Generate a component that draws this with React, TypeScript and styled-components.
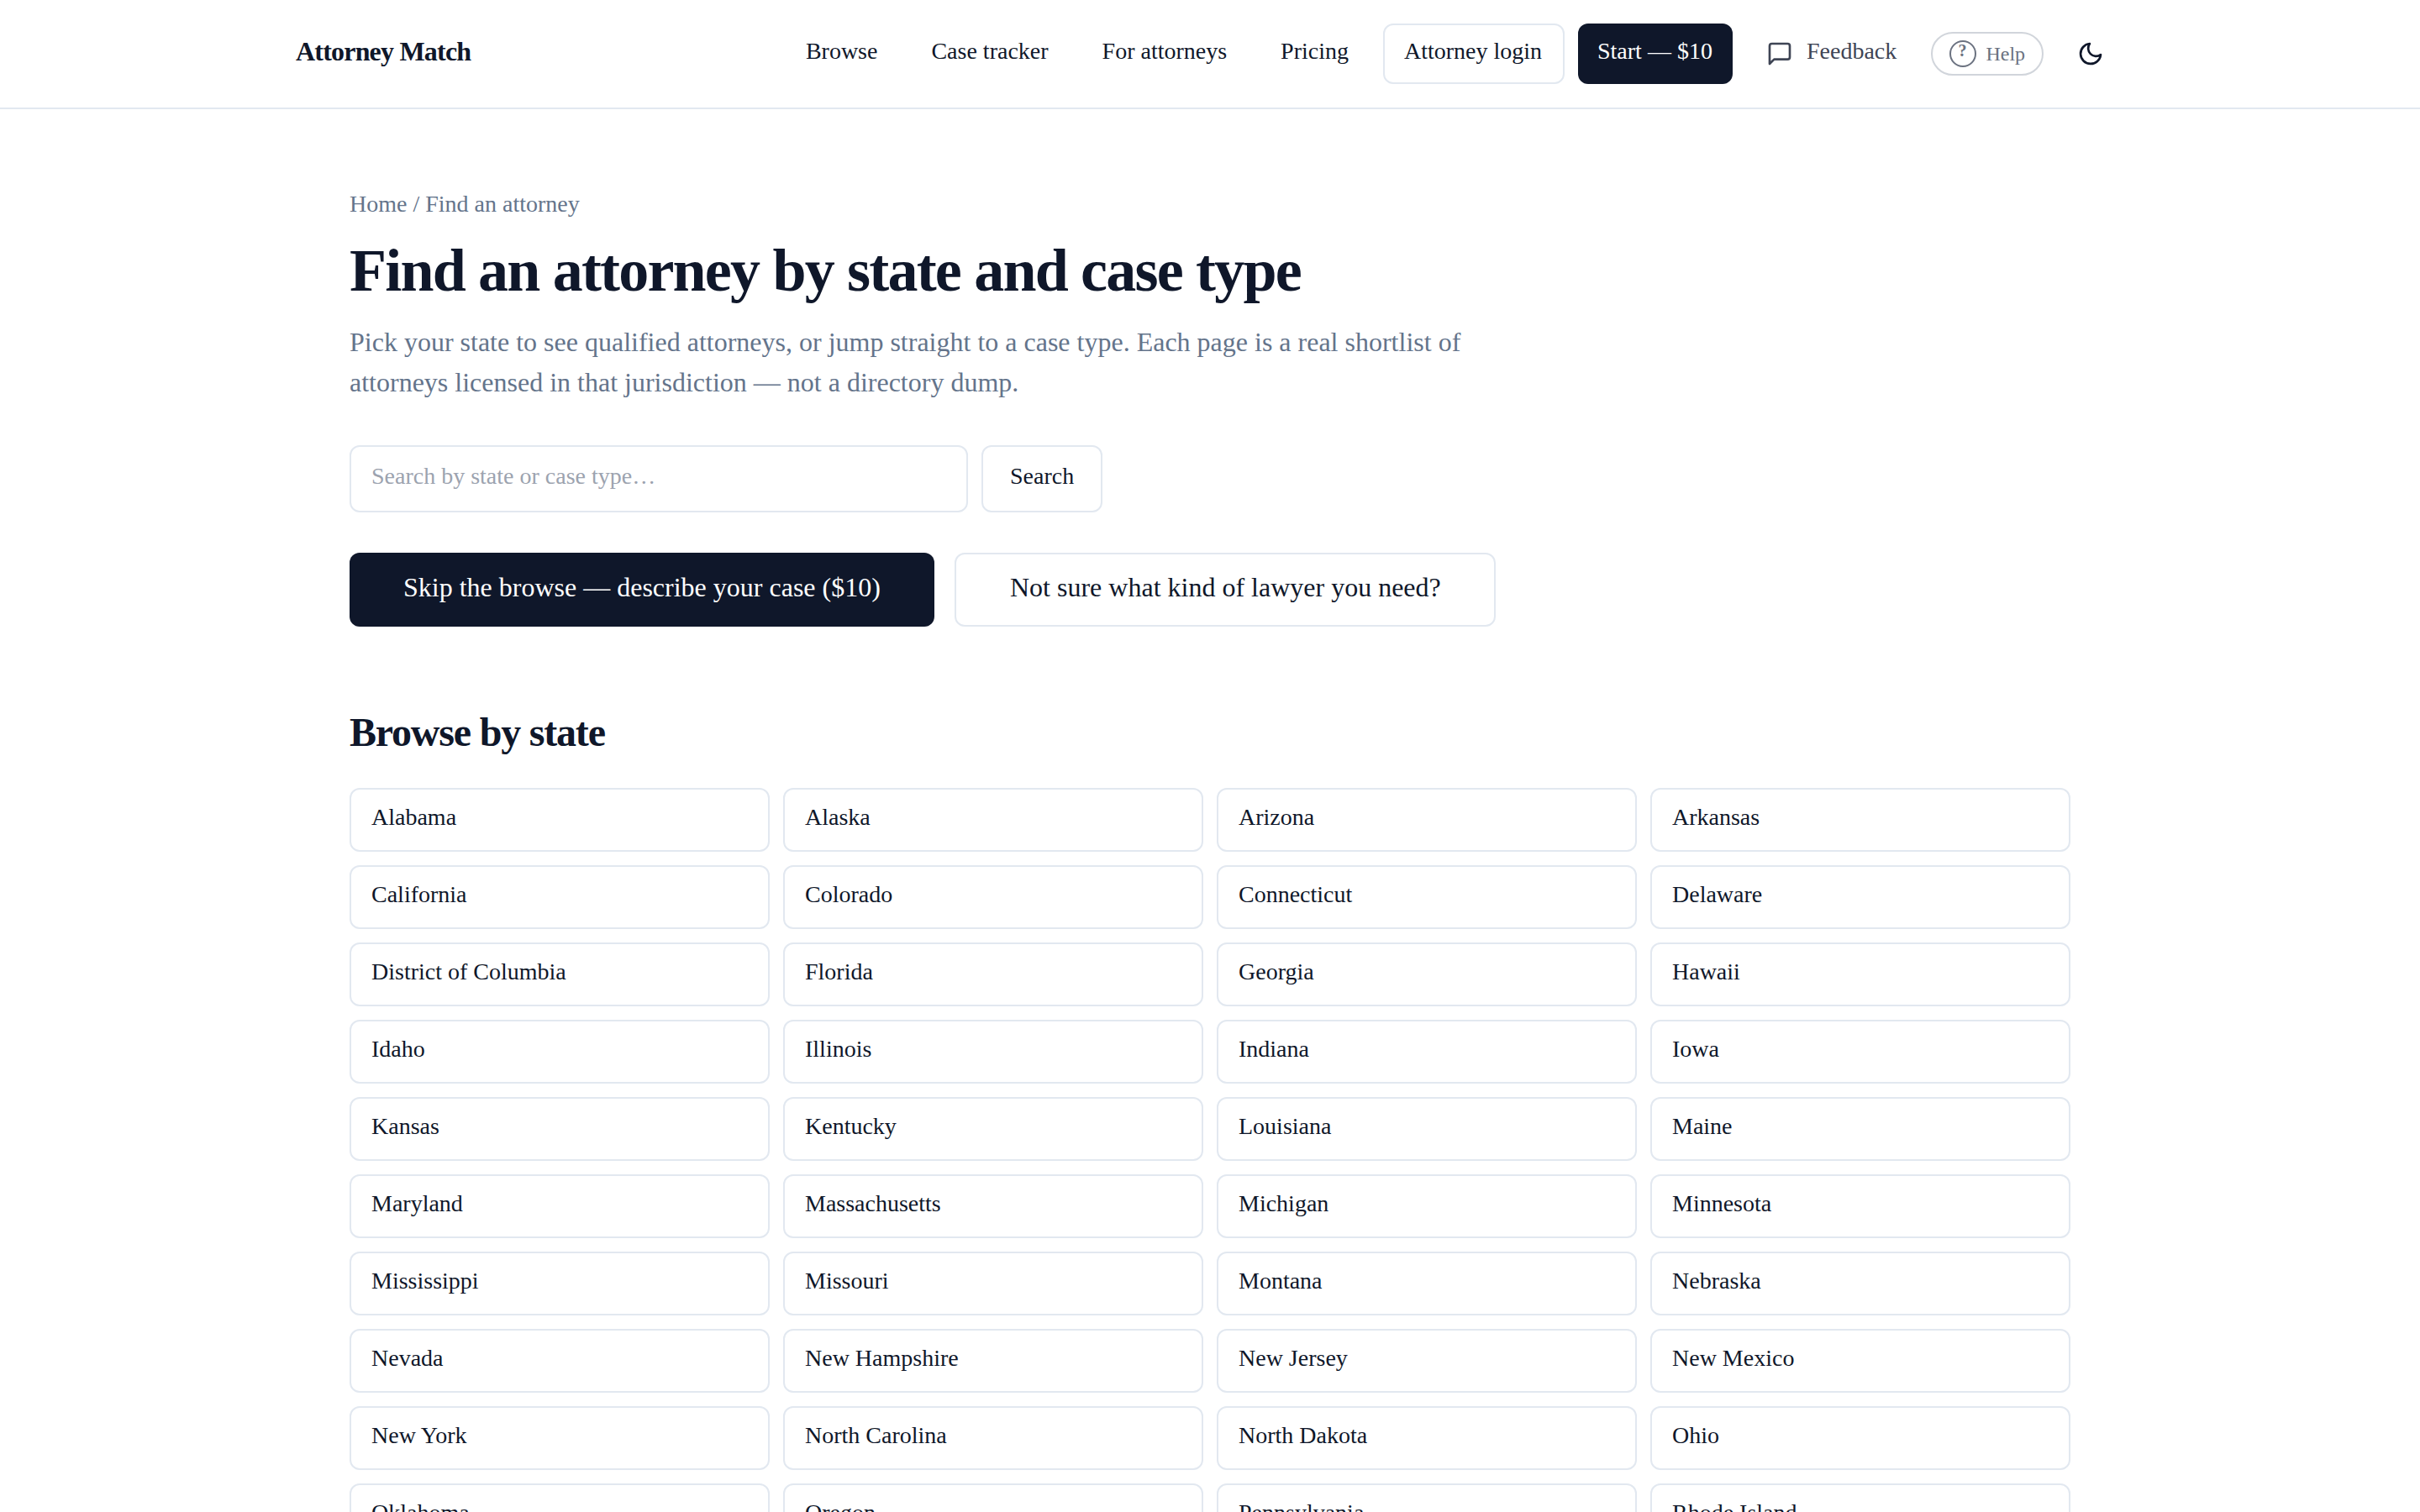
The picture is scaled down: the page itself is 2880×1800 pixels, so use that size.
import { ReactNode } from 'react';
import styled, { createGlobalStyle, css } from 'styled-components';

const STATES = [
  'Alabama', 'Alaska', 'Arizona', 'Arkansas',
  'California', 'Colorado', 'Connecticut', 'Delaware',
  'District of Columbia', 'Florida', 'Georgia', 'Hawaii',
  'Idaho', 'Illinois', 'Indiana', 'Iowa',
  'Kansas', 'Kentucky', 'Louisiana', 'Maine',
  'Maryland', 'Massachusetts', 'Michigan', 'Minnesota',
  'Mississippi', 'Missouri', 'Montana', 'Nebraska',
  'Nevada', 'New Hampshire', 'New Jersey', 'New Mexico',
  'New York', 'North Carolina', 'North Dakota', 'Ohio',
  'Oklahoma', 'Oregon', 'Pennsylvania', 'Rhode Island',
];

const NAV_LINKS = ['Browse', 'Case tracker', 'For attorneys', 'Pricing'];

const colors = {
  ink: '#0f172a',
  inkSoft: '#3f4555',
  muted: '#64748b',
  border: '#e2e8f0',
  placeholder: '#9ca3af',
  white: '#ffffff',
};

const GlobalStyle = createGlobalStyle`
  *, *::before, *::after {
    box-sizing: border-box;
  }
  body {
    margin: 0;
    background: ${colors.white};
    color: ${colors.ink};
    font-family: 'Liberation Serif', 'Times New Roman', serif;
    font-size: 28px;
    line-height: 40px;
  }
  a {
    color: inherit;
    text-decoration: none;
  }
  button, input {
    font: inherit;
    color: inherit;
  }
  h1, h2, p {
    margin: 0;
  }
`;

const Page = styled.div`
  height: 100vh;
  overflow: hidden;
`;

const outlined = css`
  border: 2px solid ${colors.border};
  border-radius: 12px;
  background: ${colors.white};
`;

const Header = styled.header`
  border-bottom: 2px solid ${colors.border};
`;

const HeaderInner = styled.div`
  display: flex;
  align-items: center;
  justify-content: space-between;
  width: 2176px;
  height: 128px;
  margin: 0 auto;
`;

const Logo = styled.a`
  padding-bottom: 6px;
  font-size: 32px;
  font-weight: 700;
  letter-spacing: -0.025em;
`;

const Nav = styled.nav`
  display: flex;
  align-items: center;
  gap: 16px;
`;

const NavLink = styled.a`
  padding: 13px 24px 19px;
  white-space: nowrap;
`;

const LoginLink = styled(NavLink)`
  ${outlined}
  width: 216px;
  margin-left: 1px;
  padding: 11px 0 17px 23px;
`;

const StartLink = styled(NavLink)`
  width: 184px;
  padding-right: 0;
  padding-left: 23px;
  border-radius: 12px;
  background: ${colors.ink};
  color: ${colors.white};
`;

const FeedbackButton = styled.button`
  display: flex;
  align-items: center;
  gap: 16px;
  width: 204px;
  height: 72px;
  padding: 0 0 0 24px;
  border: 0;
  background: none;
  color: ${colors.inkSoft};

  span {
    padding-bottom: 6px;
  }
`;

const HelpButton = styled.button`
  display: flex;
  align-items: center;
  gap: 11.4px;
  width: 134px;
  height: 52px;
  padding: 0 0 0 20px;
  border: 2px solid #d1d5db;
  border-radius: 26px;
  background: none;
  color: #6b7280;
  font-size: 24px;
`;

const HelpMark = styled.span`
  display: flex;
  flex-shrink: 0;
  justify-content: center;
  width: 32px;
  height: 32px;
  padding-right: 1px;
  border: 2px solid #6b7280;
  border-radius: 50%;
  font-size: 20px;
  font-weight: 700;
  line-height: 20px;
`;

const ThemeButton = styled.button`
  display: flex;
  align-items: center;
  justify-content: center;
  width: 80px;
  height: 72px;
  padding: 0;
  border: 0;
  background: none;
`;

const Main = styled.main`
  width: 2048px;
  margin: 0 auto;
  padding-top: 93px;
`;

const Breadcrumb = styled.div`
  color: ${colors.muted};
`;

const Title = styled.h1`
  margin-top: 19px;
  font-size: 72px;
  font-weight: 700;
  line-height: 80px;
  letter-spacing: -0.025em;
`;

const Lead = styled.p`
  max-width: 1344px;
  margin-top: 21px;
  color: ${colors.muted};
  font-size: 32px;
  line-height: 48px;
`;

const SearchForm = styled.form`
  display: flex;
  gap: 16px;
  margin-top: 51px;
`;

const SearchInput = styled.input`
  ${outlined}
  width: 736px;
  height: 80px;
  padding: 0 24px 6px;

  &::placeholder {
    color: ${colors.placeholder};
    opacity: 1;
  }
`;

const SearchButton = styled.button`
  ${outlined}
  height: 80px;
  padding: 0 32px 6px;
`;

const Actions = styled.div`
  display: flex;
  gap: 24px;
  margin-top: 48px;
`;

const ActionLink = styled.a<{ $primary?: boolean }>`
  height: 88px;
  font-size: 32px;
  line-height: 48px;
  white-space: nowrap;

  ${({ $primary }) => $primary ? css`
    width: 696px;
    padding: 17px 0 0 64px;
    border-radius: 12px;
    background: ${colors.ink};
    color: ${colors.white};
  ` : css`
    ${outlined}
    width: 644px;
    padding: 15px 0 0 64px;
  `}
`;

const SectionTitle = styled.h2`
  margin-top: 94px;
  font-size: 48px;
  font-weight: 700;
  line-height: 64px;
  letter-spacing: -0.025em;
`;

const StateGrid = styled.div`
  display: grid;
  grid-template-columns: repeat(4, 1fr);
  gap: 16px;
  margin-top: 34px;
`;

const StateCard = styled.a`
  ${outlined}
  height: 76px;
  padding: 13px 24px 0;
`;

const Icon = ({ children }: { children: ReactNode }) => (
  <svg
    width="32"
    height="32"
    viewBox="0 0 24 24"
    fill="none"
    stroke="currentColor"
    strokeWidth="2"
    strokeLinecap="round"
    strokeLinejoin="round"
    aria-hidden="true"
  >
    {children}
  </svg>
);

const SiteHeader = () => (
  <Header>
    <HeaderInner>
      <Logo href="#">Attorney Match</Logo>
      <Nav>
        {NAV_LINKS.map((label) => <NavLink href="#" key={label}>{label}</NavLink>)}
        <LoginLink href="#">Attorney login</LoginLink>
        <StartLink href="#">Start — $10</StartLink>
        <FeedbackButton type="button">
          <Icon>
            <path d="M21 15a2 2 0 0 1-2 2H7l-4 4V5a2 2 0 0 1 2-2h14a2 2 0 0 1 2 2z" />
          </Icon>
          <span>Feedback</span>
        </FeedbackButton>
        <HelpButton type="button">
          <HelpMark>?</HelpMark>
          Help
        </HelpButton>
        <ThemeButton type="button" aria-label="Toggle theme">
          <Icon>
            <path d="M21 12.79A9 9 0 1 1 11.21 3 7 7 0 0 0 21 12.79z" />
          </Icon>
        </ThemeButton>
      </Nav>
    </HeaderInner>
  </Header>
);

export default function App() {
  return (
    <Page>
      <GlobalStyle />
      <SiteHeader />
      <Main>
        <Breadcrumb>
          <a href="#">Home</a> / Find an attorney
        </Breadcrumb>
        <Title>Find an attorney by state and case type</Title>
        <Lead>
          Pick your state to see qualified attorneys, or jump straight to a case type.
          Each page is a real shortlist of attorneys licensed in that jurisdiction — not
          a directory dump.
        </Lead>
        <SearchForm>
          <SearchInput placeholder="Search by state or case type…" />
          <SearchButton type="button">Search</SearchButton>
        </SearchForm>
        <Actions>
          <ActionLink href="#" $primary>Skip the browse — describe your case ($10)</ActionLink>
          <ActionLink href="#">Not sure what kind of lawyer you need?</ActionLink>
        </Actions>
        <SectionTitle>Browse by state</SectionTitle>
        <StateGrid>
          {STATES.map((state) => <StateCard href="#" key={state}>{state}</StateCard>)}
        </StateGrid>
      </Main>
    </Page>
  );
}
